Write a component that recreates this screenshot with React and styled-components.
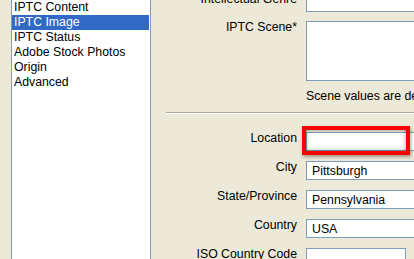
import React from 'react'
import styled, { createGlobalStyle } from 'styled-components'

const GlobalStyle = createGlobalStyle`
  html, body {
    margin: 0;
    padding: 0;
    overflow: hidden;
    background: #ECE9D8;
  }
  body {
    font-family: "Liberation Sans", Arial, sans-serif;
    font-size: 12.3px;
    color: #000;
  }
`

const Window = styled.div`
  display: flex;
  height: 259px;
  overflow: hidden;
  background: #ECE9D8;
  padding-left: 11px;
`

const List = styled.ul`
  list-style: none;
  margin: -1px 0 0 0;
  padding: 0 1px 0 0;
  width: 140px;
  height: 280px;
  flex-shrink: 0;
  box-sizing: border-box;
  background: #fff;
  border: 1px solid #7F9DB9;
`

const Item = styled.li`
  height: 15px;
  line-height: 15px;
  padding-left: 2px;
  white-space: nowrap;
  background: ${p => (p.$selected ? '#316AC5' : 'transparent')};
  color: ${p => (p.$selected ? '#fff' : '#000')};
`

const Panel = styled.div`
  flex: 1;
  min-width: 0;
  display: flex;
  flex-direction: column;
  margin-top: -7px;
  padding-left: 15px;
  overflow: hidden;
`

const Row = styled.div`
  display: grid;
  grid-template-columns: 131px 1fr;
  column-gap: 9px;
  margin-top: ${p => p.$top || 0}px;
`

const Label = styled.label`
  text-align: right;
  line-height: 12px;
  white-space: nowrap;
`

const Field = styled.div`
  position: relative;
`

const Input = styled.input`
  display: block;
  box-sizing: border-box;
  width: ${p => p.$width || 170}px;
  height: 19px;
  margin: 0;
  padding: 0 5px;
  border: 1px solid #7F9DB9;
  background: #fff;
  font: inherit;
  color: #000;
  line-height: 17px;
  outline: none;
`

const Area = styled.textarea`
  display: block;
  box-sizing: border-box;
  width: 170px;
  height: 60px;
  margin: 0;
  padding: 2px 5px;
  border: 1px solid #7F9DB9;
  background: #fff;
  font: inherit;
  resize: none;
  outline: none;
`

const Note = styled.div`
  line-height: 15px;
  white-space: nowrap;
`

const Separator = styled.hr`
  margin: ${p => p.$top || 0}px 0 0 0;
  height: 0;
  border: 0;
  border-top: 1px solid #ACA899;
  border-bottom: 1px solid #fff;
`

const Highlight = styled.span`
  position: absolute;
  left: -4px;
  top: -6px;
  width: 108px;
  height: 29px;
  box-sizing: border-box;
  border: 4px solid #FF0000;
  box-shadow: 1px 2px 3px rgba(0, 0, 0, 0.35), inset 0 0 4px rgba(0, 0, 0, 0.4);
  pointer-events: none;
`

const sections = ['IPTC Content', 'IPTC Image', 'IPTC Status', 'Adobe Stock Photos', 'Origin', 'Advanced']

const address = [
  { label: 'City', value: 'Pittsburgh' },
  { label: 'State/Province', value: 'Pennsylvania' },
  { label: 'Country', value: 'USA' },
  { label: 'ISO Country Code', value: '', width: 100 },
]

export default function App() {
  return (
    <Window>
      <GlobalStyle />
      <List>
        {sections.map(name => (
          <Item key={name} $selected={name === 'IPTC Image'}>{name}</Item>
        ))}
      </List>

      <Panel>
        <Row>
          <Label>Intellectual Genre</Label>
          <Input defaultValue="" />
        </Row>
        <Row $top={9}>
          <Label>IPTC Scene*</Label>
          <Area defaultValue="" />
        </Row>
        <Row $top={8}>
          <span />
          <Note>Scene values are defined by the IPTC Scene-NewsCodes</Note>
        </Row>

        <Separator $top={8} />

        <Row $top={18}>
          <Label>Location</Label>
          <Field>
            <Input defaultValue="" />
            <Highlight />
          </Field>
        </Row>
        {address.map(f => (
          <Row key={f.label} $top={10}>
            <Label>{f.label}</Label>
            <Input defaultValue={f.value} $width={f.width} />
          </Row>
        ))}
      </Panel>
    </Window>
  )
}
